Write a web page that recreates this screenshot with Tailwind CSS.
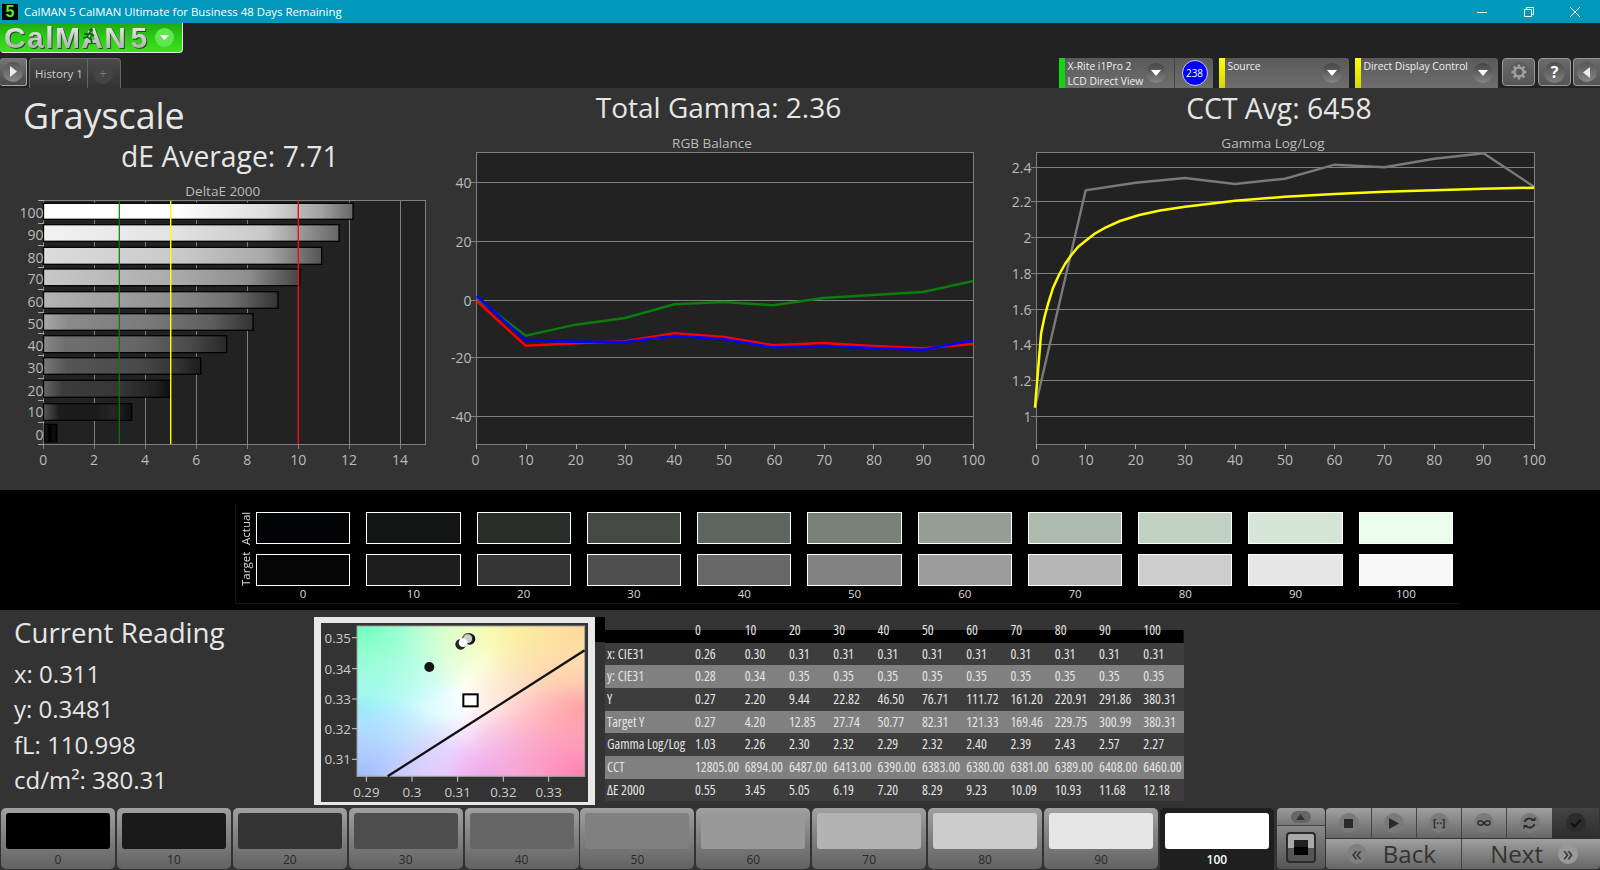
<!doctype html>
<html lang="en">
  <head>
    <meta charset="UTF-8" />
    <title>CalMAN 5</title>
    <script src="https://cdn.jsdelivr.net/npm/@tailwindcss/browser@4"></script>
  </head>

  <body class="h-[870px] w-[1600px] overflow-hidden bg-[#222] font-['Open_Sans',sans-serif] text-[#e6e6e6]">
    <!-- title bar -->
    <div class="flex h-[23px] items-center bg-[#0099bb] text-white">
      <div class="ml-[2px] flex h-[16px] w-[16px] items-center justify-center bg-black font-['Liberation_Sans'] text-[16px] font-bold leading-none text-[#5ff01a]">5</div>
      <span class="ml-[6px] text-[11.4px]">CalMAN 5 CalMAN Ultimate for Business 48 Days Remaining</span>
      <div class="ml-auto flex items-center">
        <svg class="mr-[35px]" width="12" height="12" viewBox="0 0 12 12"><path d="M1 6.5h10" stroke="#fff" fill="none" /></svg>
        <svg class="mr-[34px]" width="12" height="12" viewBox="0 0 12 12"><path d="M1.5 3.5h7v7h-7zM3.5 3.5v-2h7v7h-2" stroke="#fff" fill="none" /></svg>
        <svg class="mr-[19px]" width="12" height="12" viewBox="0 0 12 12"><path d="M1 1l10 10M11 1L1 11" stroke="#fff" fill="none" /></svg>
      </div>
    </div>

    <!-- logo and tabs -->
    <div class="relative flex h-[65px] items-end">
      <div class="absolute left-0 top-0 flex h-[30px] w-[183px] items-center rounded-b-[4px] border-b border-r border-[#dfeedd] bg-linear-to-b from-[#1fa812] via-[#2ccc18] to-[#3be21c] pl-[4px]">
        <span class="bg-linear-to-b from-[#f0f0f0] to-[#a8a8a8] bg-clip-text font-['Liberation_Sans'] text-[30px] font-bold leading-[30px] tracking-[1.4px] text-transparent drop-shadow-[1px_1px_0_#2a4a2a]">CalMAN</span>
        <svg class="absolute left-[81px] top-[4px]" width="16" height="17" viewBox="0 0 16 17"><circle cx="10" cy="3" r="2" fill="#0a6a0a" /><path d="M9 5L6 10l-4 1M6 10l4 2 1 4M9 6l4 3M7 7L3 7" stroke="#0a6a0a" stroke-width="1.8" fill="none" /></svg>
        <span class="ml-[3px] bg-linear-to-b from-[#f0f0f0] to-[#a8a8a8] bg-clip-text font-['Liberation_Sans'] text-[30px] font-bold leading-[30px] text-transparent drop-shadow-[1px_1px_0_#2a4a2a]">5</span>
        <div class="ml-[8px] flex h-[19px] w-[19px] items-center justify-center rounded-full bg-[#62e64e]">
          <svg width="9" height="5" viewBox="0 0 9 5"><path d="M0 0h9L4.5 5z" fill="#fff" /></svg>
        </div>
      </div>

      <div class="mb-[2px] ml-0 flex h-[28px] w-[27px] items-center justify-center rounded-[3px] border-b border-r border-[#aaa] bg-linear-to-b from-[#777] to-[#4a4a4a]">
        <div class="flex h-[20px] w-[20px] items-center justify-center rounded-full bg-linear-to-b from-[#555] to-[#888]">
          <svg width="8" height="11" viewBox="0 0 8 11"><path d="M1 0l7 5.5L1 11z" fill="#eee" /></svg>
        </div>
      </div>
      <div class="ml-[2px] flex h-[30px] w-[92px] items-center rounded-t-[4px] border-x border-t border-[#666] bg-linear-to-b from-[#4a4a4a] to-[#333]">
        <span class="w-[58px] border-r border-[#666] pl-[5px] text-[11.5px] leading-[29px] text-[#ccc]">History 1</span>
        <div class="ml-[5px] flex h-[20px] w-[20px] items-center justify-center rounded-full bg-[#444] text-[13px] leading-none text-[#777]">+</div>
      </div>

      <div class="ml-auto flex h-[30px] w-[154px] items-stretch rounded-t-[3px] bg-linear-to-b from-[#5a5a5a] to-[#6e6e6e]">
        <div class="h-full w-[5.5px] bg-[#0fd80f]"></div>
        <div class="w-[73px] pl-[3px] pt-[1px] text-[10.3px] leading-[14.5px] text-[#eee]">
          <div class="whitespace-nowrap">X-Rite i1Pro 2</div>
          <div class="whitespace-nowrap">LCD Direct View</div>
        </div>
        <div class="mt-[5px] ml-[8px] flex h-[20px] w-[20px] items-center justify-center rounded-full bg-linear-to-b from-[#444] to-[#858585]">
          <svg width="10" height="6" viewBox="0 0 10 6"><path d="M0 0h10L5 6z" fill="#fff" /></svg>
        </div>
        <div class="ml-[8px] w-[1px] bg-[#444]"></div>
        <div class="ml-[7px] mt-[1.5px] flex h-[26px] w-[26px] items-center justify-center rounded-full border border-[#ccd] bg-[#0000ff] text-[10px] leading-none text-white">238</div>
      </div>

      <div class="ml-[6px] flex h-[30px] w-[130px] items-stretch rounded-t-[3px] bg-linear-to-b from-[#5a5a5a] to-[#6e6e6e]">
        <div class="h-full w-[5.5px] bg-linear-to-b from-[#ffff00] to-[#d8d800]"></div>
        <div class="w-[90px] pl-[3px] pt-[1px] text-[10.3px] leading-[14.5px] text-[#eee]">Source</div>
        <div class="mt-[5px] ml-[7px] flex h-[20px] w-[20px] items-center justify-center rounded-full bg-linear-to-b from-[#444] to-[#858585]">
          <svg width="10" height="6" viewBox="0 0 10 6"><path d="M0 0h10L5 6z" fill="#fff" /></svg>
        </div>
      </div>

      <div class="ml-[6px] flex h-[30px] w-[143px] items-stretch rounded-t-[3px] bg-linear-to-b from-[#5a5a5a] to-[#6e6e6e]">
        <div class="h-full w-[5.5px] bg-linear-to-b from-[#ffff00] to-[#d8d800]"></div>
        <div class="w-[106px] whitespace-nowrap pl-[3px] pt-[1px] text-[10.3px] leading-[14.5px] text-[#eee]">Direct Display Control</div>
        <div class="mt-[5px] ml-[6px] flex h-[20px] w-[20px] items-center justify-center rounded-full bg-linear-to-b from-[#444] to-[#858585]">
          <svg width="10" height="6" viewBox="0 0 10 6"><path d="M0 0h10L5 6z" fill="#fff" /></svg>
        </div>
      </div>

      <div class="mb-[2px] ml-[4px] flex h-[28px] w-[33px] items-center justify-center rounded-[4px] border border-[#999] bg-linear-to-b from-[#6a6a6a] to-[#555]">
        <svg width="20" height="20" viewBox="0 0 20 20"><circle cx="10" cy="10" r="10" fill="#5c5c5c" /><circle cx="10" cy="10" r="4.5" fill="none" stroke="#a0a0a0" stroke-width="2.4" /><path d="M10 2.5v3M10 14.5v3M2.5 10h3M14.5 10h3M4.7 4.7l2.1 2.1M13.2 13.2l2.1 2.1M15.3 4.7l-2.1 2.1M6.8 13.2l-2.1 2.1" stroke="#a0a0a0" stroke-width="2.4" /></svg>
      </div>
      <div class="mb-[2px] ml-[3px] flex h-[28px] w-[33px] items-center justify-center rounded-[4px] border border-[#999] bg-linear-to-b from-[#6a6a6a] to-[#555]">
        <div class="flex h-[21px] w-[21px] items-center justify-center rounded-full bg-linear-to-b from-[#4c4c4c] to-[#808080] text-[16px] font-bold leading-none text-white">?</div>
      </div>
      <div class="mb-[2px] ml-[2px] flex h-[28px] w-[27px] items-center justify-center rounded-l-[4px] border-y border-l border-[#999] bg-linear-to-b from-[#6a6a6a] to-[#555]">
        <div class="flex h-[20px] w-[20px] items-center justify-center rounded-full bg-linear-to-b from-[#555] to-[#888]">
          <svg width="8" height="11" viewBox="0 0 8 11"><path d="M7 0L0 5.5 7 11z" fill="#eee" /></svg>
        </div>
      </div>
    </div>

    <!-- charts -->
    <main class="flex h-[402px] bg-[#333]">
      <section class="flex w-[440px] flex-col">
        <h1 class="mt-[3px] flex h-[50px] items-center pl-[23px] text-[35.8px]">Grayscale</h1>
        <h2 class="flex h-[30px] items-center pl-[121px] text-[28.3px]">dE Average: 7.71</h2>
        <svg class="mt-[9px]" width="440" height="310" viewBox="0 0 440 310" font-size="14" fill="#bbb">
          <defs>
            <linearGradient id="b100"><stop offset="0" stop-color="#fff" /><stop offset=".42" stop-color="#fff" /><stop offset=".72" stop-color="#ddd" /><stop offset=".9" stop-color="#a0a0a0" /><stop offset="1" stop-color="#666" /></linearGradient>
            <linearGradient id="b90"><stop offset="0" stop-color="#f2f2f2" /><stop offset=".45" stop-color="#e2e2e2" /><stop offset=".75" stop-color="#c8c8c8" /><stop offset="1" stop-color="#666" /></linearGradient>
            <linearGradient id="b80"><stop offset="0" stop-color="#dcdcdc" /><stop offset=".5" stop-color="#c8c8c8" /><stop offset=".8" stop-color="#a8a8a8" /><stop offset="1" stop-color="#555" /></linearGradient>
            <linearGradient id="b70"><stop offset="0" stop-color="#c8c8c8" /><stop offset=".5" stop-color="#acacac" /><stop offset=".8" stop-color="#8e8e8e" /><stop offset="1" stop-color="#444" /></linearGradient>
            <linearGradient id="b60"><stop offset="0" stop-color="#b4b4b4" /><stop offset=".5" stop-color="#929292" /><stop offset=".8" stop-color="#707070" /><stop offset="1" stop-color="#333" /></linearGradient>
            <linearGradient id="b50"><stop offset="0" stop-color="#a8a8a8" /><stop offset=".12" stop-color="#8a8a8a" /><stop offset=".5" stop-color="#7a7a7a" /><stop offset=".8" stop-color="#5e5e5e" /><stop offset="1" stop-color="#333" /></linearGradient>
            <linearGradient id="b40"><stop offset="0" stop-color="#888" /><stop offset=".12" stop-color="#6e6e6e" /><stop offset=".5" stop-color="#666" /><stop offset=".8" stop-color="#4a4a4a" /><stop offset="1" stop-color="#282828" /></linearGradient>
            <linearGradient id="b30"><stop offset="0" stop-color="#777" /><stop offset=".15" stop-color="#555" /><stop offset=".6" stop-color="#4a4a4a" /><stop offset=".85" stop-color="#333" /><stop offset="1" stop-color="#1c1c1c" /></linearGradient>
            <linearGradient id="b20"><stop offset="0" stop-color="#666" /><stop offset=".15" stop-color="#3c3c3c" /><stop offset=".6" stop-color="#363636" /><stop offset=".9" stop-color="#1f1f1f" /><stop offset="1" stop-color="#0c0c0c" /></linearGradient>
            <linearGradient id="b10"><stop offset="0" stop-color="#555" /><stop offset=".18" stop-color="#1c1c1c" /><stop offset=".6" stop-color="#1c1c1c" /><stop offset=".8" stop-color="#262626" /><stop offset="1" stop-color="#0d0d0d" /></linearGradient>
            <linearGradient id="b0"><stop offset="0" stop-color="#222" /><stop offset=".4" stop-color="#000" /><stop offset=".8" stop-color="#111" /><stop offset="1" stop-color="#000" /></linearGradient>
          </defs>
          <text x="222.8" y="10.7" text-anchor="middle" dominant-baseline="central" font-size="13.5">DeltaE 2000</text>
          <g shape-rendering="crispEdges">
            <rect x="43.5" y="20.5" width="381.5" height="243.5" fill="#222" stroke="#808080" />
            <path d="M94 20.7V269M145 20.7V269M196.3 20.7V269M247.3 20.7V269M298.3 20.7V269M349 20.7V269M400 20.7V269M43.5 264V269" stroke="#808080" fill="none" />
            <path d="M38 20.7h5.5M38 43.3h5.5M38 65h5.5M38 87.3h5.5M38 109.3h5.5M38 132h5.5M38 153.7h5.5M38 175.7h5.5M38 198h5.5M38 220.3h5.5M38 242.3h5.5M38 264h5.5" stroke="#aaa" fill="none" />
          </g>
          <g stroke="#000" stroke-width="1.3">
            <rect x="43.5" y="23.3" width="309.5" height="16" fill="url(#b100)" />
            <rect x="43.5" y="44.7" width="295.5" height="16.6" fill="url(#b90)" />
            <rect x="43.5" y="67.3" width="278.2" height="17" fill="url(#b80)" />
            <rect x="43.5" y="89" width="256.2" height="16.7" fill="url(#b70)" />
            <rect x="43.5" y="111.7" width="234.5" height="16.6" fill="url(#b60)" />
            <rect x="43.5" y="133.7" width="209.5" height="16.6" fill="url(#b50)" />
            <rect x="43.5" y="155.7" width="183.2" height="17" fill="url(#b40)" />
            <rect x="43.5" y="177.7" width="157.2" height="16.6" fill="url(#b30)" />
            <rect x="43.5" y="200.3" width="127.2" height="17" fill="url(#b20)" />
            <rect x="43.5" y="223.7" width="88.2" height="16.6" fill="url(#b10)" />
            <rect x="44.5" y="244.3" width="12.2" height="17.4" fill="url(#b0)" />
          </g>
          <path d="M119.3 20.7V264" stroke="#0a7a0a" stroke-width="1.2" fill="none" />
          <path d="M170.7 20.7V264" stroke="#ffff00" stroke-width="1.4" fill="none" />
          <path d="M298.3 20.7V264" stroke="#f01010" stroke-width="1.4" fill="none" />
          <g text-anchor="end" dominant-baseline="central">
            <text x="43.5" y="32.7">100</text>
            <text x="43.5" y="54">90</text>
            <text x="43.5" y="77.7">80</text>
            <text x="43.5" y="98.3">70</text>
            <text x="43.5" y="121">60</text>
            <text x="43.5" y="143.3">50</text>
            <text x="43.5" y="165.3">40</text>
            <text x="43.5" y="187.7">30</text>
            <text x="43.5" y="210.3">20</text>
            <text x="43.5" y="231.7">10</text>
            <text x="43.5" y="254.7">0</text>
          </g>
          <g text-anchor="middle" dominant-baseline="central">
            <text x="43.3" y="279">0</text>
            <text x="94" y="279">2</text>
            <text x="145" y="279">4</text>
            <text x="196.3" y="279">6</text>
            <text x="247.3" y="279">8</text>
            <text x="298.3" y="279">10</text>
            <text x="349" y="279">12</text>
            <text x="400" y="279">14</text>
          </g>
        </svg>
      </section>

      <section class="flex w-[560px] flex-col">
        <h2 class="flex h-[42px] items-center justify-center pb-[4px] pr-[3px] text-[28px]">Total Gamma: 2.36</h2>
        <svg width="560" height="350" viewBox="0 0 560 350" font-size="14" fill="#bbb">
          <text x="272" y="13" text-anchor="middle" dominant-baseline="central" font-size="13.5">RGB Balance</text>
          <g shape-rendering="crispEdges">
            <rect x="36.8" y="22.7" width="496.4" height="291.3" fill="#222" stroke="#808080" />
            <path d="M31 52.3H533M31 111.3H533M31 170H533M31 227.3H533M31 286.3H533" stroke="#808080" fill="none" />
            <path d="M36.8 314v5M86.4 314v5M136.1 314v5M185.7 314v5M235.4 314v5M285 314v5M334.6 314v5M384.3 314v5M433.9 314v5M483.6 314v5M533.2 314v5" stroke="#aaa" fill="none" />
          </g>
          <polyline points="36.8,168.3 85.7,205.7 135.7,194.7 185,188 234.3,174.3 283.9,172 333.2,175.3 382.9,168 432.5,165 482.9,162 533.2,151" fill="none" stroke="#0a7d0a" stroke-width="2.4" />
          <polyline points="36.8,171 85.7,215.7 135.7,213.3 185,211.3 234.3,203.3 283.9,207 333.2,215.3 382.9,213 432.5,216 482.9,218.3 533.2,214" fill="none" stroke="#ff0000" stroke-width="2.4" />
          <polyline points="36.8,166 85.7,210.3 135.7,211.7 185,212 234.3,205.7 283.9,209 333.2,217.3 382.9,216 432.5,218 482.9,219.7 533.2,210.3" fill="none" stroke="#0000ff" stroke-width="2.4" />
          <g text-anchor="end" dominant-baseline="central">
            <text x="31.5" y="52.3">40</text>
            <text x="31.5" y="111.3">20</text>
            <text x="31.5" y="170">0</text>
            <text x="31.5" y="227.3">-20</text>
            <text x="31.5" y="286.3">-40</text>
          </g>
          <g text-anchor="middle" dominant-baseline="central">
            <text x="35.5" y="329">0</text>
            <text x="85.7" y="329">10</text>
            <text x="135.7" y="329">20</text>
            <text x="185" y="329">30</text>
            <text x="234.3" y="329">40</text>
            <text x="283.9" y="329">50</text>
            <text x="334.6" y="329">60</text>
            <text x="384.3" y="329">70</text>
            <text x="433.9" y="329">80</text>
            <text x="483.6" y="329">90</text>
            <text x="533.2" y="329">100</text>
          </g>
        </svg>
      </section>

      <section class="flex w-[600px] flex-col">
        <h2 class="flex h-[42px] items-center justify-center pb-[2px] pr-[42px] text-[28.3px]">CCT Avg: 6458</h2>
        <svg width="600" height="350" viewBox="0 0 600 350" font-size="14" fill="#bbb">
          <text x="273" y="13" text-anchor="middle" dominant-baseline="central" font-size="13.5">Gamma Log/Log</text>
          <g shape-rendering="crispEdges">
            <rect x="36.8" y="22.7" width="497.2" height="291.3" fill="#222" stroke="#808080" />
            <path d="M31 37.3H534M31 71.3H534M31 107.3H534M31 143.3H534M31 179.3H534M31 214.3H534M31 250.3H534M31 286.3H534" stroke="#808080" fill="none" />
            <path d="M36.8 314v5M85.7 314v5M135.7 314v5M185 314v5M235 314v5M285 314v5M334.6 314v5M384.3 314v5M434.3 314v5M483.6 314v5M534 314v5" stroke="#aaa" fill="none" />
          </g>
          <polyline points="35,277.7 85.7,60.3 135.7,52.7 185,48 235,54 285,48.7 334.6,34.7 384.3,37.3 434.3,28.7 483.6,23.3 534,56.7" fill="none" stroke="#7a7a7a" stroke-width="2.4" />
          <polyline points="35,277.7 41.1,203.3 44.5,187 48.2,173.3 53,158 58.9,145 65,134 71.4,125 78,117 85.7,110.7 95,103.5 105.4,97.7 120,91 139.3,85 160,80.5 185,76.7 235,70.7 285,66.7 334.6,64 384.3,61.7 434.3,60.3 483.6,58.7 534,57.7" fill="none" stroke="#ffff00" stroke-width="2.5" stroke-linejoin="round" />
          <g text-anchor="end" dominant-baseline="central">
            <text x="31.5" y="37.3">2.4</text>
            <text x="31.5" y="71.3">2.2</text>
            <text x="31.5" y="107.3">2</text>
            <text x="31.5" y="143.3">1.8</text>
            <text x="31.5" y="179.3">1.6</text>
            <text x="31.5" y="214.3">1.4</text>
            <text x="31.5" y="250.3">1.2</text>
            <text x="31.5" y="286.3">1</text>
          </g>
          <g text-anchor="middle" dominant-baseline="central">
            <text x="35.5" y="329">0</text>
            <text x="85.7" y="329">10</text>
            <text x="135.7" y="329">20</text>
            <text x="185" y="329">30</text>
            <text x="235" y="329">40</text>
            <text x="285" y="329">50</text>
            <text x="334.6" y="329">60</text>
            <text x="384.3" y="329">70</text>
            <text x="434.3" y="329">80</text>
            <text x="483.6" y="329">90</text>
            <text x="534" y="329">100</text>
          </g>
        </svg>
      </section>
    </main>

    <!-- actual / target swatches -->
    <div class="flex h-[120px] items-start bg-black">
      <div class="ml-[235px] mt-[14px] flex h-[100px] w-[1226px] border-b border-l border-[#141414] text-[11.5px] text-[#ddd]">
        <div class="flex w-[20px] flex-col items-center pr-[1px] pt-[6px]">
          <span class="h-[36px] rotate-180 text-center text-[11.5px] leading-none [writing-mode:vertical-rl]">Actual</span>
          <span class="mt-[5px] h-[36px] rotate-180 text-center text-[11.5px] leading-none [writing-mode:vertical-rl]">Target</span>
        </div>
        <div class="grid w-[1197px] grid-cols-11 gap-x-[16px] pt-[8px]">
          <div class="h-[32px] border border-white bg-[#020304]"></div>
          <div class="h-[32px] border border-white bg-[#121513]"></div>
          <div class="h-[32px] border border-white bg-[#2a2e2a]"></div>
          <div class="h-[32px] border border-white bg-[#454b44]"></div>
          <div class="h-[32px] border border-white bg-[#5f665f]"></div>
          <div class="h-[32px] border border-white bg-[#798278]"></div>
          <div class="h-[32px] border border-white bg-[#949e94]"></div>
          <div class="h-[32px] border border-white bg-[#adb9ad]"></div>
          <div class="h-[32px] border border-white bg-[#c1d1c1]"></div>
          <div class="h-[32px] border border-white bg-[#d6e6d6]"></div>
          <div class="h-[32px] border border-white bg-[#eafcea]"></div>

          <div class="mt-[9px] h-[32px] border border-white bg-[#050505]"></div>
          <div class="mt-[9px] h-[32px] border border-white bg-[#1d1d1d]"></div>
          <div class="mt-[9px] h-[32px] border border-white bg-[#363636]"></div>
          <div class="mt-[9px] h-[32px] border border-white bg-[#4f4f4f]"></div>
          <div class="mt-[9px] h-[32px] border border-white bg-[#686868]"></div>
          <div class="mt-[9px] h-[32px] border border-white bg-[#818181]"></div>
          <div class="mt-[9px] h-[32px] border border-white bg-[#9c9c9c]"></div>
          <div class="mt-[9px] h-[32px] border border-white bg-[#b5b5b5]"></div>
          <div class="mt-[9px] h-[32px] border border-white bg-[#cdcdcd]"></div>
          <div class="mt-[9px] h-[32px] border border-white bg-[#e6e6e6]"></div>
          <div class="mt-[9px] h-[32px] border border-white bg-[#f8f8f8]"></div>

          <span class="text-center leading-[16px]">0</span>
          <span class="text-center leading-[16px]">10</span>
          <span class="text-center leading-[16px]">20</span>
          <span class="text-center leading-[16px]">30</span>
          <span class="text-center leading-[16px]">40</span>
          <span class="text-center leading-[16px]">50</span>
          <span class="text-center leading-[16px]">60</span>
          <span class="text-center leading-[16px]">70</span>
          <span class="text-center leading-[16px]">80</span>
          <span class="text-center leading-[16px]">90</span>
          <span class="text-center leading-[16px]">100</span>
        </div>
      </div>
    </div>

    <!-- current reading, CIE chart, table -->
    <div class="flex h-[198px] items-start bg-[#333]">
      <div class="w-[314px] pl-[14px] text-[24px]">
        <div class="flex h-[46px] items-center text-[27.7px]">Current Reading</div>
        <div class="flex h-[35.5px] items-center">x: 0.311</div>
        <div class="flex h-[35.5px] items-center">y: 0.3481</div>
        <div class="flex h-[35.5px] items-center">fL: 110.998</div>
        <div class="flex h-[35.5px] items-center">cd/m²: 380.31</div>
      </div>

      <div class="mt-[7px] h-[188px] w-[281px] border-x-[7px] border-b-[3px] border-t-[6px] border-[#e8e8e8] bg-[#333]">
        <svg class="block" width="267" height="179" viewBox="62 38 801 537" font-size="40" fill="#ccc">
          <defs>
            <radialGradient id="tl" cx="0" cy="0" r="0.62"><stop offset="0" stop-color="#6dffbe" /><stop offset="1" stop-color="#6dffbe" stop-opacity="0" /></radialGradient>
            <radialGradient id="ml" cx="0" cy="0.55" r="0.5"><stop offset="0" stop-color="#9ff5ff" /><stop offset="1" stop-color="#9ff5ff" stop-opacity="0" /></radialGradient>
            <radialGradient id="bl" cx="0" cy="1" r="0.55"><stop offset="0" stop-color="#9db8ff" /><stop offset="1" stop-color="#9db8ff" stop-opacity="0" /></radialGradient>
            <radialGradient id="tm" cx="0.75" cy="0" r="0.55"><stop offset="0" stop-color="#f5ff9a" /><stop offset="1" stop-color="#f5ff9a" stop-opacity="0" /></radialGradient>
            <radialGradient id="tr" cx="1" cy="0" r="0.5"><stop offset="0" stop-color="#ffd79a" /><stop offset="1" stop-color="#ffd79a" stop-opacity="0" /></radialGradient>
            <radialGradient id="mr" cx="1" cy="0.55" r="0.55"><stop offset="0" stop-color="#ffaf9f" /><stop offset="1" stop-color="#ffaf9f" stop-opacity="0" /></radialGradient>
            <radialGradient id="br" cx="1" cy="1" r="0.62"><stop offset="0" stop-color="#ff7fb0" /><stop offset="1" stop-color="#ff7fb0" stop-opacity="0" /></radialGradient>
            <radialGradient id="bm" cx="0.55" cy="1" r="0.45"><stop offset="0" stop-color="#e8b8ff" /><stop offset="1" stop-color="#e8b8ff" stop-opacity="0" /></radialGradient>
          </defs>
          <rect x="170" y="47" width="683" height="451" fill="#fff" />
          <rect x="170" y="47" width="683" height="451" fill="url(#ml)" />
          <rect x="170" y="47" width="683" height="451" fill="url(#tl)" />
          <rect x="170" y="47" width="683" height="451" fill="url(#bl)" />
          <rect x="170" y="47" width="683" height="451" fill="url(#tm)" />
          <rect x="170" y="47" width="683" height="451" fill="url(#mr)" />
          <rect x="170" y="47" width="683" height="451" fill="url(#tr)" />
          <rect x="170" y="47" width="683" height="451" fill="url(#bm)" />
          <rect x="170" y="47" width="683" height="451" fill="url(#br)" />
          <rect x="170" y="47" width="683" height="451" fill="none" stroke="#999" stroke-width="3" />
          <path d="M155 82h15M155 175h15M155 266h15M155 355h15M155 447h15M198 498v16M335 498v16M472 498v16M609 498v16M745 498v16" stroke="#ccc" stroke-width="3" fill="none" />
          <path d="M262 498L853 120" stroke="#111" stroke-width="7" fill="none" />
          <circle cx="387" cy="170" r="15" fill="#151515" />
          <circle cx="481" cy="102" r="16" fill="#222" />
          <circle cx="508" cy="86" r="17" fill="#111" />
          <circle cx="502" cy="85" r="15" fill="#ccc" stroke="#222" stroke-width="3" />
          <circle cx="488" cy="97" r="13" fill="#fff" />
          <rect x="489" y="252" width="43" height="36" fill="#fff" stroke="#000" stroke-width="6" />
          <g text-anchor="end" dominant-baseline="central">
            <text x="152" y="82">0.35</text>
            <text x="152" y="175">0.34</text>
            <text x="152" y="266">0.33</text>
            <text x="152" y="355">0.32</text>
            <text x="152" y="447">0.31</text>
          </g>
          <g text-anchor="middle" dominant-baseline="central">
            <text x="198" y="544">0.29</text>
            <text x="335" y="544">0.3</text>
            <text x="472" y="544">0.31</text>
            <text x="609" y="544">0.32</text>
            <text x="745" y="544">0.33</text>
          </g>
        </svg>
      </div>

      <div class="mt-[7px] h-[25px] w-[10px] bg-black"></div>

      <table class="mt-[7px] w-[579px] table-fixed text-[13.8px] leading-[22.7px] text-[#e4e4e4] [font-stretch:75%]">
        <colgroup>
          <col class="w-[90px]" />
          <col class="w-[49.7px]" />
          <col span="9" class="w-[44.3px]" />
          <col />
        </colgroup>
        <thead class="bg-linear-to-b from-[#333] from-50% to-[#000] to-50%">
          <tr class="h-[25.5px] [&_th]:pt-[2px] [&_th]:text-left [&_th]:font-normal"><th></th><th>0</th><th>10</th><th>20</th><th>30</th><th>40</th><th>50</th><th>60</th><th>70</th><th>80</th><th>90</th><th>100</th></tr>
        </thead>
        <tbody class="[&_td]:whitespace-nowrap [&_td:first-child]:pl-[2px]">
          <tr class="bg-[#3d3d3d]"><td>x: CIE31</td><td>0.26</td><td>0.30</td><td>0.31</td><td>0.31</td><td>0.31</td><td>0.31</td><td>0.31</td><td>0.31</td><td>0.31</td><td>0.31</td><td>0.31</td></tr>
          <tr class="bg-[#808080]"><td>y: CIE31</td><td>0.28</td><td>0.34</td><td>0.35</td><td>0.35</td><td>0.35</td><td>0.35</td><td>0.35</td><td>0.35</td><td>0.35</td><td>0.35</td><td>0.35</td></tr>
          <tr class="bg-[#3d3d3d]"><td>Y</td><td>0.27</td><td>2.20</td><td>9.44</td><td>22.82</td><td>46.50</td><td>76.71</td><td>111.72</td><td>161.20</td><td>220.91</td><td>291.86</td><td>380.31</td></tr>
          <tr class="bg-[#808080]"><td>Target Y</td><td>0.27</td><td>4.20</td><td>12.85</td><td>27.74</td><td>50.77</td><td>82.31</td><td>121.33</td><td>169.46</td><td>229.75</td><td>300.99</td><td>380.31</td></tr>
          <tr class="bg-[#3d3d3d]"><td>Gamma Log/Log</td><td>1.03</td><td>2.26</td><td>2.30</td><td>2.32</td><td>2.29</td><td>2.32</td><td>2.40</td><td>2.39</td><td>2.43</td><td>2.57</td><td>2.27</td></tr>
          <tr class="bg-[#808080]"><td>CCT</td><td>12805.00</td><td>6894.00</td><td>6487.00</td><td>6413.00</td><td>6390.00</td><td>6383.00</td><td>6380.00</td><td>6381.00</td><td>6389.00</td><td>6408.00</td><td>6460.00</td></tr>
          <tr class="bg-[#3d3d3d]"><td>ΔE 2000</td><td>0.55</td><td>3.45</td><td>5.05</td><td>6.19</td><td>7.20</td><td>8.29</td><td>9.23</td><td>10.09</td><td>10.93</td><td>11.68</td><td>12.18</td></tr>
        </tbody>
      </table>
    </div>

    <!-- bottom strip -->
    <div class="flex h-[62px] gap-x-[1.9px] bg-[#333] pl-[1px] text-[12px] leading-none">
      <div class="flex h-[61px] w-[114px] flex-col items-center rounded-[5px] bg-linear-to-b from-[#a0a0a0] to-[#626262] pt-[5px] text-[#2a2a2a]"><div class="h-[36px] w-[104px] rounded-[3px] bg-[#000]"></div><span class="mt-[5px]">0</span></div>
      <div class="flex h-[61px] w-[114px] flex-col items-center rounded-[5px] bg-linear-to-b from-[#a0a0a0] to-[#626262] pt-[5px] text-[#2a2a2a]"><div class="h-[36px] w-[104px] rounded-[3px] bg-[#1a1a1a]"></div><span class="mt-[5px]">10</span></div>
      <div class="flex h-[61px] w-[114px] flex-col items-center rounded-[5px] bg-linear-to-b from-[#a0a0a0] to-[#626262] pt-[5px] text-[#2a2a2a]"><div class="h-[36px] w-[104px] rounded-[3px] bg-[#333]"></div><span class="mt-[5px]">20</span></div>
      <div class="flex h-[61px] w-[114px] flex-col items-center rounded-[5px] bg-linear-to-b from-[#a0a0a0] to-[#626262] pt-[5px] text-[#2a2a2a]"><div class="h-[36px] w-[104px] rounded-[3px] bg-[#4d4d4d]"></div><span class="mt-[5px]">30</span></div>
      <div class="flex h-[61px] w-[114px] flex-col items-center rounded-[5px] bg-linear-to-b from-[#a0a0a0] to-[#626262] pt-[5px] text-[#2a2a2a]"><div class="h-[36px] w-[104px] rounded-[3px] bg-[#666]"></div><span class="mt-[5px]">40</span></div>
      <div class="flex h-[61px] w-[114px] flex-col items-center rounded-[5px] bg-linear-to-b from-[#a0a0a0] to-[#626262] pt-[5px] text-[#2a2a2a]"><div class="h-[36px] w-[104px] rounded-[3px] bg-[#808080]"></div><span class="mt-[5px]">50</span></div>
      <div class="flex h-[61px] w-[114px] flex-col items-center rounded-[5px] bg-linear-to-b from-[#a0a0a0] to-[#626262] pt-[5px] text-[#2a2a2a]"><div class="h-[36px] w-[104px] rounded-[3px] bg-[#999]"></div><span class="mt-[5px]">60</span></div>
      <div class="flex h-[61px] w-[114px] flex-col items-center rounded-[5px] bg-linear-to-b from-[#a0a0a0] to-[#626262] pt-[5px] text-[#2a2a2a]"><div class="h-[36px] w-[104px] rounded-[3px] bg-[#b3b3b3]"></div><span class="mt-[5px]">70</span></div>
      <div class="flex h-[61px] w-[114px] flex-col items-center rounded-[5px] bg-linear-to-b from-[#a0a0a0] to-[#626262] pt-[5px] text-[#2a2a2a]"><div class="h-[36px] w-[104px] rounded-[3px] bg-[#ccc]"></div><span class="mt-[5px]">80</span></div>
      <div class="flex h-[61px] w-[114px] flex-col items-center rounded-[5px] bg-linear-to-b from-[#a0a0a0] to-[#626262] pt-[5px] text-[#2a2a2a]"><div class="h-[36px] w-[104px] rounded-[3px] bg-[#e6e6e6]"></div><span class="mt-[5px]">90</span></div>
      <div class="flex h-[62px] w-[114px] flex-col items-center rounded-t-[5px] bg-[#1f1f1f] pt-[5px] font-semibold text-white"><div class="h-[36px] w-[104px] rounded-[3px] bg-white"></div><span class="mt-[5px]">100</span></div>

      <div class="ml-[1px] flex w-[48px] flex-col">
        <div class="flex h-[18px] items-center justify-center rounded-t-[4px] border-b border-[#444] bg-linear-to-b from-[#9a9a9a] to-[#777]">
          <div class="flex h-[12px] w-[20px] items-center justify-center rounded-full bg-[#666]"><svg width="9" height="6" viewBox="0 0 9 6"><path d="M4.5 0L9 6H0z" fill="#333" /></svg></div>
        </div>
        <div class="flex h-[43px] items-center justify-center rounded-b-[4px] bg-linear-to-b from-[#888] to-[#555]">
          <div class="flex h-[31px] w-[30px] items-center justify-center rounded-[4px] border-2 border-[#2a2a2a] bg-linear-to-b from-[#aaa] from-50% to-[#555] to-50%"><div class="h-[15px] w-[14px] bg-linear-to-b from-[#222] from-50% to-[#000] to-50%"></div></div>
        </div>
      </div>

      <div class="ml-[-0.9px] flex w-[274px] flex-col gap-y-[1px]">
        <div class="flex h-[30px]">
          <div class="flex w-[46.7px] items-center justify-center rounded-tl-[4px] border-r border-[#444] bg-linear-to-b from-[#a0a0a0] to-[#666]"><div class="flex h-[20px] w-[20px] items-center justify-center rounded-full bg-[#7a7a7a]"><div class="h-[9px] w-[9px] bg-[#2a2a2a]"></div></div></div>
          <div class="flex w-[44.7px] items-center justify-center border-r border-[#444] bg-linear-to-b from-[#a0a0a0] to-[#666]"><div class="flex h-[20px] w-[20px] items-center justify-center rounded-full bg-[#7a7a7a]"><svg width="10" height="11" viewBox="0 0 10 11"><path d="M0 0l10 5.5-10 5.5z" fill="#2a2a2a" /></svg></div></div>
          <div class="flex w-[45px] items-center justify-center border-r border-[#444] bg-linear-to-b from-[#a0a0a0] to-[#666]"><div class="flex h-[20px] w-[20px] items-center justify-center rounded-full bg-[#7a7a7a] text-[10px] font-bold text-[#2a2a2a]">[··]</div></div>
          <div class="flex w-[45px] items-center justify-center border-r border-[#444] bg-linear-to-b from-[#a0a0a0] to-[#666]"><div class="flex h-[20px] w-[20px] items-center justify-center rounded-full bg-[#7a7a7a]"><svg width="14" height="8" viewBox="0 0 14 8"><path d="M7 4C5 1 1 .8 1 4s4 3 6 0 6-3.2 6 0-4 3-6 0z" fill="none" stroke="#2a2a2a" stroke-width="1.5" /></svg></div></div>
          <div class="flex w-[45px] items-center justify-center bg-linear-to-b from-[#a0a0a0] to-[#666]"><div class="flex h-[20px] w-[20px] items-center justify-center rounded-full bg-[#7a7a7a]"><svg width="13" height="12" viewBox="0 0 13 12"><path d="M1.5 5A5 5 0 0 1 10 3M11.5 7A5 5 0 0 1 3 9" fill="none" stroke="#2a2a2a" stroke-width="1.8" /><path d="M8 4h4.5V0zM5 8H.5v4z" fill="#2a2a2a" /></svg></div></div>
          <div class="flex w-[47.3px] items-center justify-center bg-linear-to-b from-[#444] to-[#2e2e2e]"><div class="flex h-[20px] w-[20px] items-center justify-center rounded-full bg-[#2c2c2c]"><svg width="12" height="10" viewBox="0 0 12 10"><path d="M1 5l3.5 3.5L11 1.5" fill="none" stroke="#111" stroke-width="2.2" /></svg></div></div>
        </div>
        <div class="flex h-[30px] text-[24px] font-medium leading-none text-[#333]">
          <div class="flex w-[136.5px] items-center rounded-bl-[4px] border-r border-[#444] bg-linear-to-b from-[#a0a0a0] to-[#666] pl-[21px]">
            <div class="flex h-[20px] w-[20px] items-center justify-center rounded-full bg-[#808080] pb-[2px] text-[21px]">«</div>
            <span class="ml-[16px]">Back</span>
          </div>
          <div class="flex w-[137.5px] items-center rounded-br-[4px] bg-linear-to-b from-[#a0a0a0] to-[#666] pl-[28px]">
            <span>Next</span>
            <div class="ml-[15px] flex h-[20px] w-[20px] items-center justify-center rounded-full bg-[#999] pb-[2px] text-[21px]">»</div>
          </div>
        </div>
      </div>
    </div>
  </body>
</html>
